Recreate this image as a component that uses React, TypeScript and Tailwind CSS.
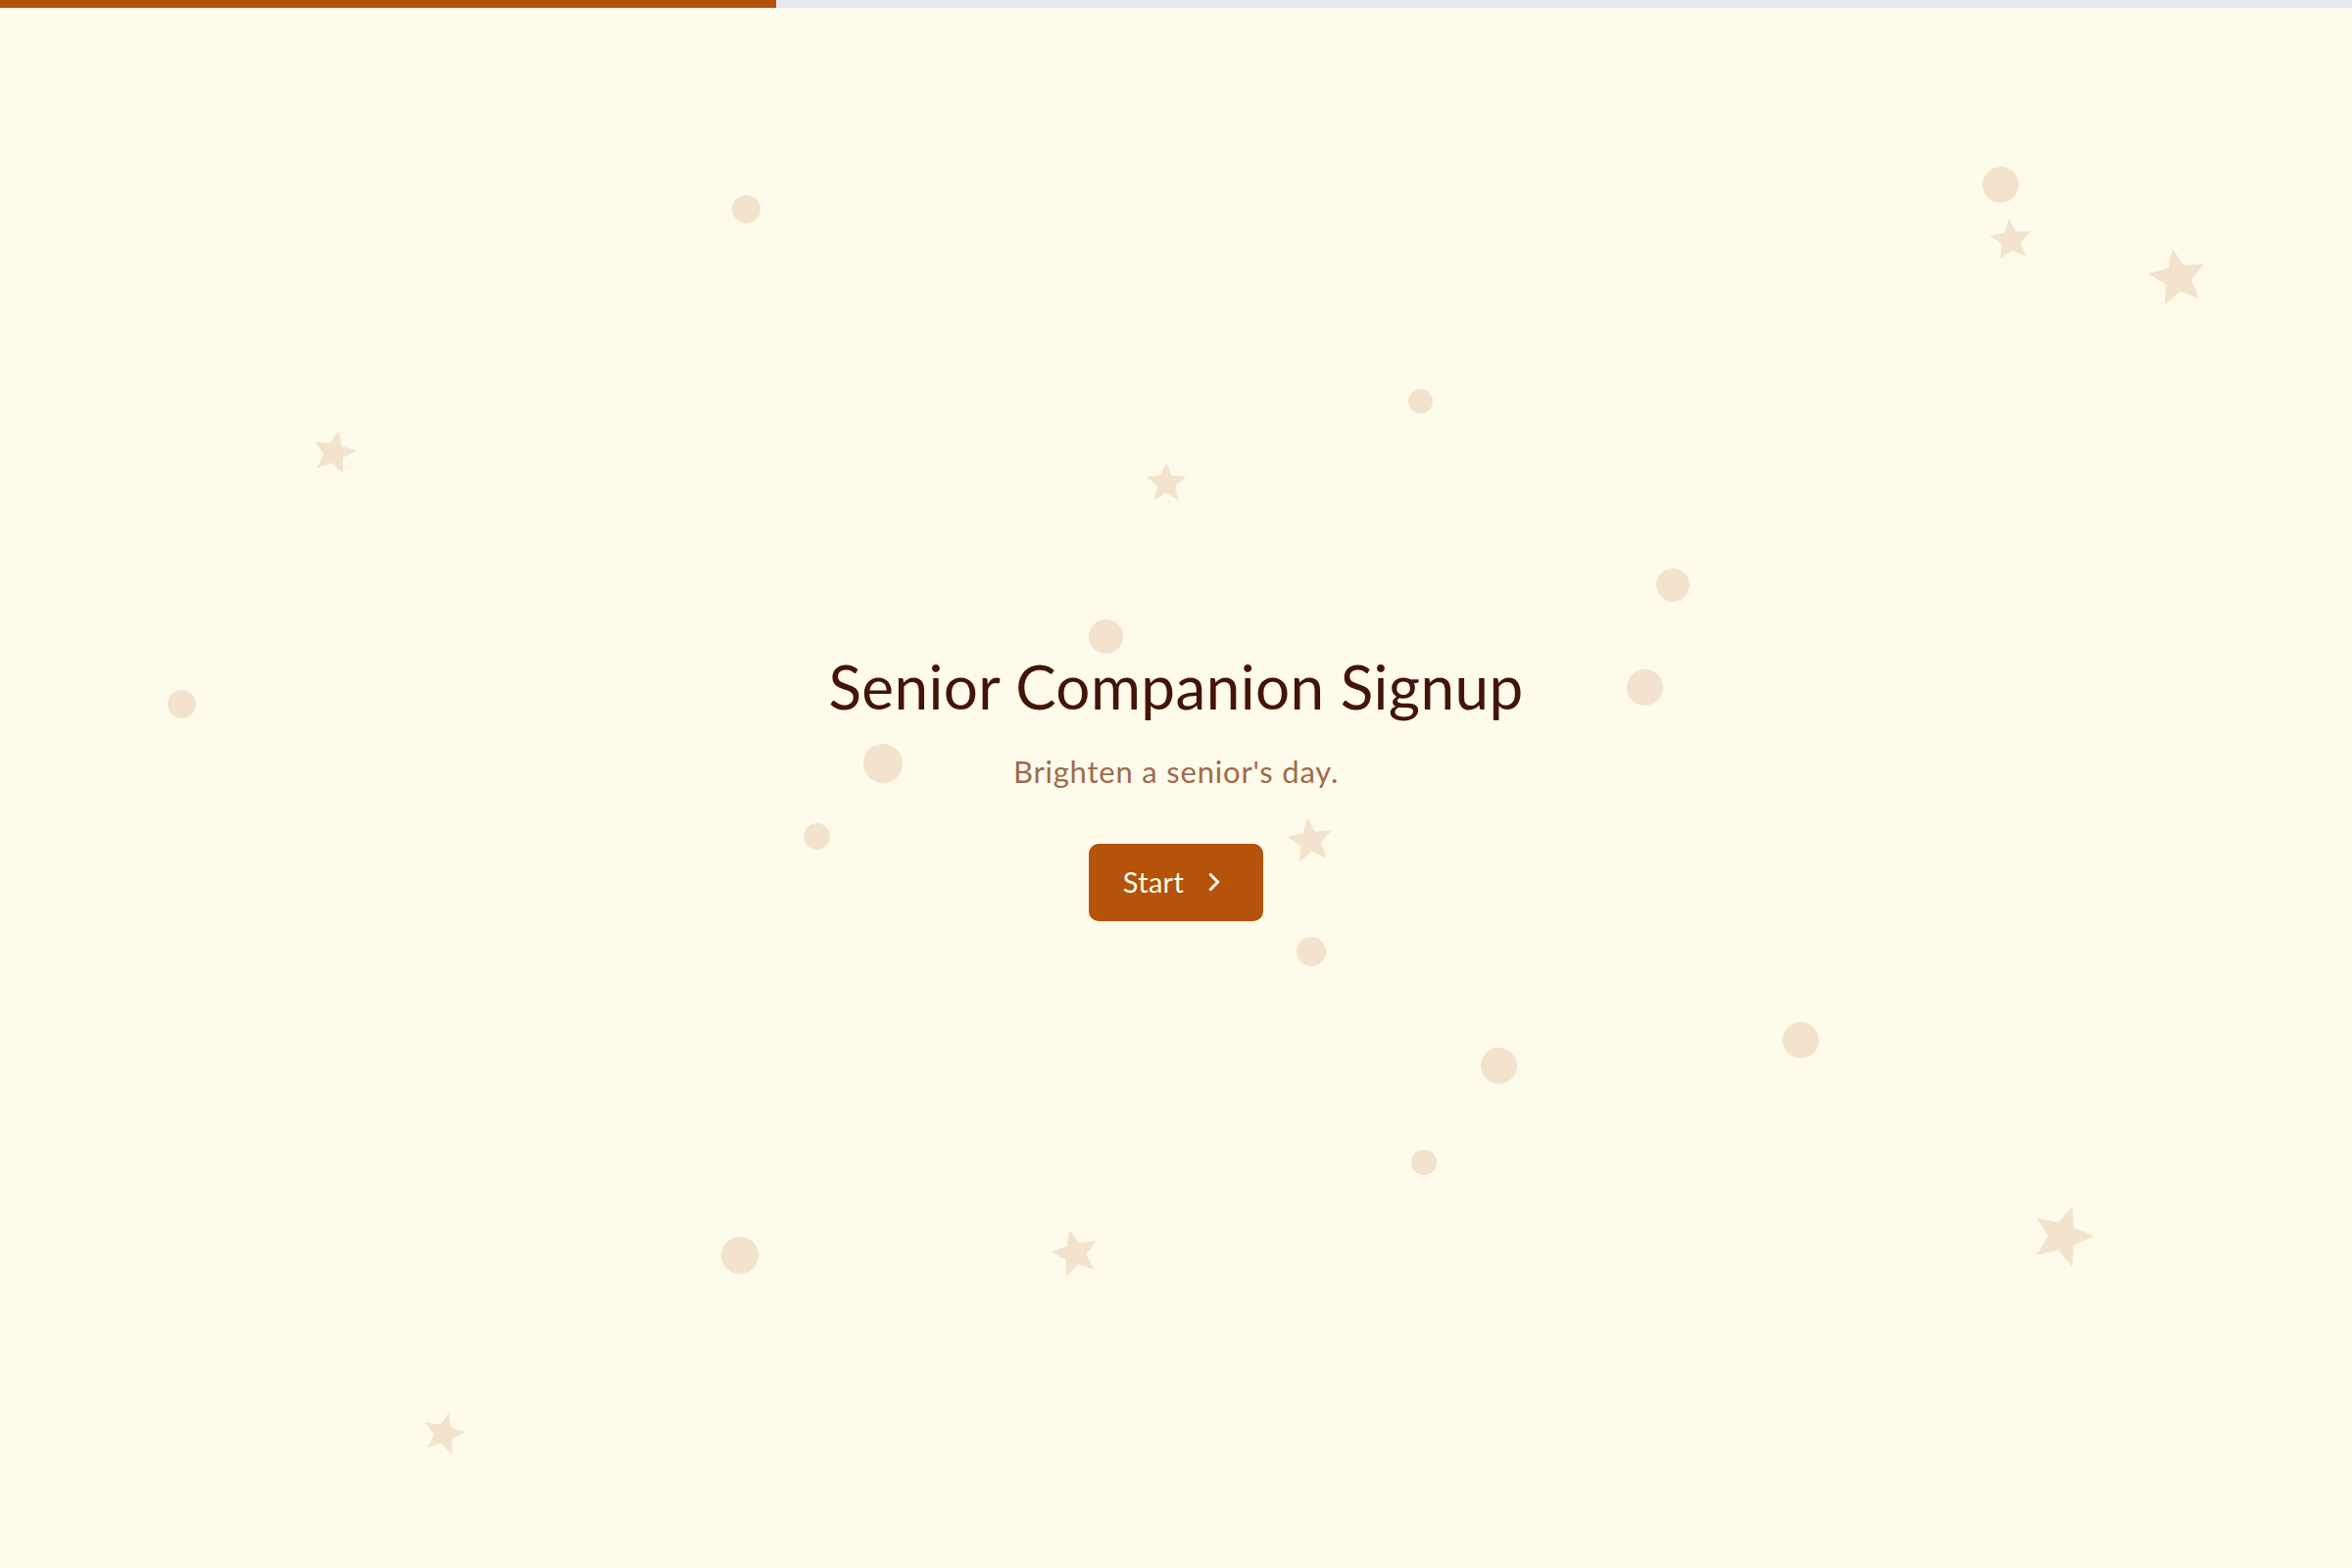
import { ChevronRight } from 'lucide-react';

// decorative background bits, coordinates on the 2400x1600 canvas
const dots = [
  { x: 761, y: 213, d: 29 },
  { x: 2041, y: 188, d: 37 },
  { x: 1449, y: 409, d: 25 },
  { x: 1707, y: 597, d: 34 },
  { x: 1128, y: 649, d: 35 },
  { x: 185, y: 718, d: 29 },
  { x: 1678, y: 701, d: 37 },
  { x: 901, y: 779, d: 40 },
  { x: 833, y: 853, d: 27 },
  { x: 1338, y: 971, d: 30 },
  { x: 1529, y: 1087, d: 37 },
  { x: 1837, y: 1061, d: 37 },
  { x: 1453, y: 1186, d: 26 },
  { x: 755, y: 1281, d: 38 },
];

const stars = [
  { x: 2052, y: 244, s: 48, r: -6 },
  { x: 2222, y: 282, s: 66, r: -10 },
  { x: 341, y: 461, s: 50, r: 12 },
  { x: 1190, y: 492, s: 46, r: 0 },
  { x: 1337, y: 857, s: 52, r: -8 },
  { x: 1097, y: 1278, s: 54, r: -14 },
  { x: 2105, y: 1260, s: 70, r: 18 },
  { x: 453, y: 1462, s: 48, r: 14 },
];

function Star({ size }: { size: number }) {
  return (
    <svg width={size} height={size} viewBox="0 0 24 24">
      <polygon
        points="12,1.5 14.9,8.4 22.5,9.1 16.8,14.1 18.5,21.6 12,17.6 5.5,21.6 7.2,14.1 1.5,9.1 9.1,8.4"
        fill="#f3e3cd"
      />
    </svg>
  );
}

function Background() {
  return (
    <div className="pointer-events-none absolute inset-0">
      {dots.map((d, i) => (
        <div
          key={i}
          className="absolute rounded-full bg-[#f3e3cd]"
          style={{ left: d.x - d.d / 2, top: d.y - d.d / 2, width: d.d, height: d.d }}
        />
      ))}
      {stars.map((s, i) => (
        <div
          key={i}
          className="absolute"
          style={{ left: s.x - s.s / 2, top: s.y - s.s / 2, transform: `rotate(${s.r}deg)` }}
        >
          <Star size={s.s} />
        </div>
      ))}
    </div>
  );
}

export default function App() {
  return (
    <div className="relative flex h-screen flex-col overflow-hidden bg-[#fffbeb] font-['Lato','Noto_Sans',sans-serif]">
      <Background />

      {/* progress */}
      <div className="relative h-2 w-full bg-[#e5e7eb]">
        <div className="h-full w-[33%] bg-[#b45309]" />
      </div>

      <div className="relative flex flex-1 flex-col items-center justify-center">
        <h1 className="text-[62px] leading-none font-normal tracking-[0.4px] text-[#431407]">
          Senior Companion Signup
        </h1>
        <p className="mt-[38px] text-[31px] leading-9 tracking-[0.8px] text-[#9f6b4a]">
          Brighten a senior's day.
        </p>
        <button className="mt-14 flex h-[79px] items-center gap-4 rounded-[10px] bg-[#b45309] px-[35px] text-[29px] tracking-[0.3px] text-[#fffbeb]">
          Start
          <ChevronRight size={30} strokeWidth={2.5} />
        </button>
      </div>
    </div>
  );
}
